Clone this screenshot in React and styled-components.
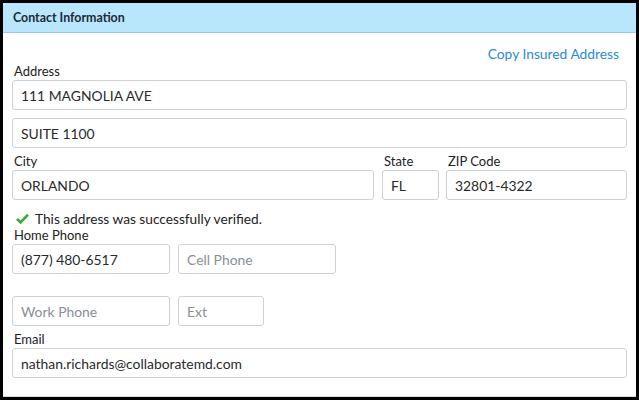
import styled, { createGlobalStyle } from "styled-components";

const GlobalStyle = createGlobalStyle`
  html, body {
    margin: 0;
    padding: 0;
    background: #000;
  }
  * {
    box-sizing: border-box;
  }
`;

const Frame = styled.div`
  width: 639px;
  height: 400px;
  border: 3px solid #000;
  background: #fff;
  font-family: Lato, "Liberation Sans", sans-serif;
  color: #222;
`;

const Panel = styled.section`
  height: 100%;
  display: flex;
  flex-direction: column;
  border-bottom: 1px solid #d8dde3;
`;

const Header = styled.header`
  height: 30px;
  flex: none;
  display: flex;
  align-items: center;
  padding: 0 10px 1px;
  background: #b8e6fd;
  border-bottom: 1px solid #9cc9e2;
  font-size: 12.4px;
  font-weight: 700;
  color: #1f2a33;
`;

const Body = styled.div`
  padding: 13px 9px 0;
  display: flex;
  flex-direction: column;
`;

const CopyRow = styled.div`
  display: flex;
  justify-content: flex-end;
  padding-right: 8px;
  height: 16px;
  line-height: 16px;
`;

const CopyLink = styled.a`
  font-size: 13.8px;
  color: #2b8ad6;
  text-decoration: none;
  cursor: pointer;
`;

const Row = styled.div`
  display: flex;
  gap: ${(p) => p.$gap ?? 8}px;
  margin-top: ${(p) => p.$top ?? 0}px;
`;

const Field = styled.div`
  display: flex;
  flex-direction: column;
  margin-top: ${(p) => p.$top ?? 0}px;
  margin-left: ${(p) => p.$left ?? 0}px;
  width: ${(p) => (p.$width ? `${p.$width}px` : "auto")};
  flex: ${(p) => (p.$width ? "none" : "1")};
`;

const Label = styled.label`
  display: block;
  height: 16px;
  line-height: 16px;
  margin-bottom: 1px;
  padding-left: 2px;
  font-size: 13px;
  color: #222;
`;

const Input = styled.input`
  width: 100%;
  height: 30px;
  padding: 0 8px;
  border: 1px solid #cdd2d9;
  border-radius: 3px;
  font-family: Lato, "Liberation Sans", sans-serif;
  font-size: 13.9px;
  color: #2a2a2a;
  background: #fff;
  outline: none;
  &::placeholder {
    color: #8a8f96;
  }
`;

const Verified = styled.div`
  display: flex;
  align-items: center;
  gap: 6px;
  height: 16px;
  margin-top: 10px;
  padding-left: 4px;
  font-size: 13.7px;
  color: #222;
`;

const Check = () => (
  <svg width="13" height="11" viewBox="0 0 13 11">
    <path
      d="M1 6 L4.6 9.4 L12 1.6"
      fill="none"
      stroke="#3aa83a"
      strokeWidth="2.6"
      strokeLinejoin="miter"
    />
  </svg>
);

export default function App() {
  return (
    <>
      <GlobalStyle />
      <Frame>
        <Panel>
          <Header>Contact Information</Header>
          <Body>
            <CopyRow>
              <CopyLink>Copy Insured Address</CopyLink>
            </CopyRow>
            <Field $top={1}>
              <Label>Address</Label>
              <Input defaultValue="111 MAGNOLIA AVE" />
            </Field>
            <Row $top={8}>
              <Field>
                <Input defaultValue="SUITE 1100" />
              </Field>
            </Row>
            <Row $top={5} $gap={0}>
              <Field>
                <Label>City</Label>
                <Input defaultValue="ORLANDO" />
              </Field>
              <Field $width={57} $left={8}>
                <Label>State</Label>
                <Input defaultValue="FL" />
              </Field>
              <Field $width={181} $left={7}>
                <Label>ZIP Code</Label>
                <Input defaultValue="32801-4322" />
              </Field>
            </Row>
            <Verified>
              <Check />
              This address was successfully verified.
            </Verified>
            <Row $top={1}>
              <Field $width={158}>
                <Label>Home Phone</Label>
                <Input defaultValue="(877) 480-6517" />
              </Field>
              <Field $width={158}>
                <Label>&nbsp;</Label>
                <Input placeholder="Cell Phone" />
              </Field>
            </Row>
            <Row $top={22}>
              <Field $width={158}>
                <Input placeholder="Work Phone" />
              </Field>
              <Field $width={86}>
                <Input placeholder="Ext" />
              </Field>
            </Row>
            <Field $top={5}>
              <Label>Email</Label>
              <Input defaultValue="nathan.richards@collaboratemd.com" />
            </Field>
          </Body>
        </Panel>
      </Frame>
    </>
  );
}
